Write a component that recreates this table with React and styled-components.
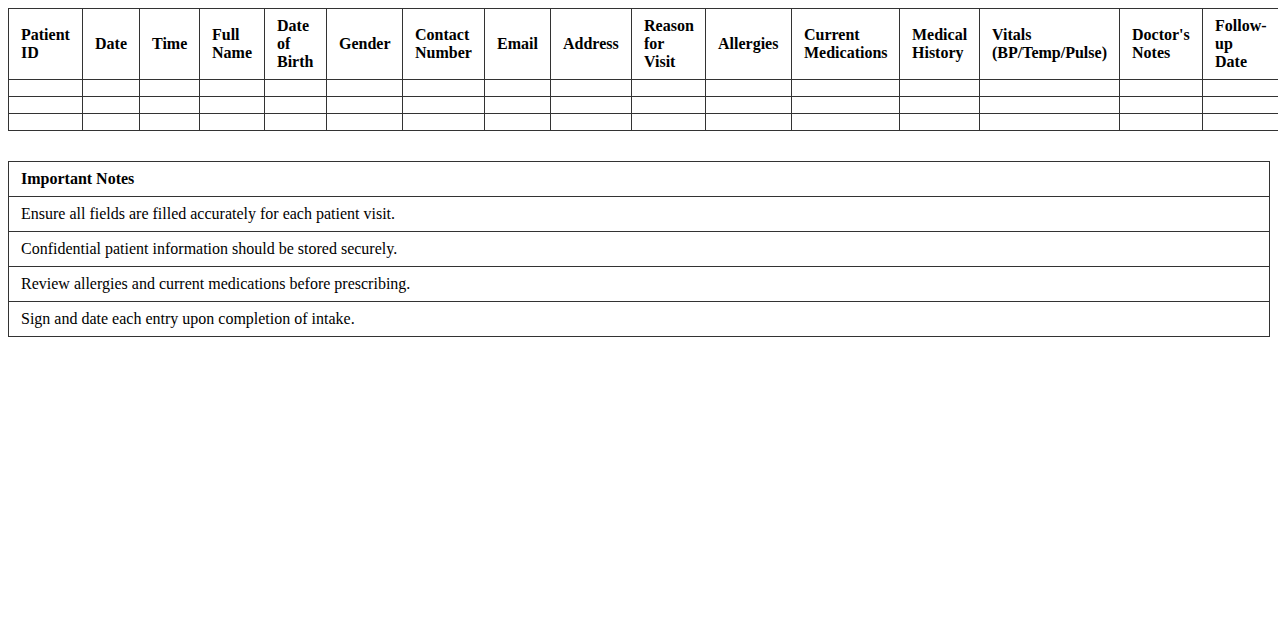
import React from "react";
import styled, { createGlobalStyle } from "styled-components";

const GlobalStyle = createGlobalStyle`
  body {
    margin: 0;
    font-family: "Liberation Serif", "Times New Roman", serif;
    font-size: 16px;
    color: #000;
    background: #fff;
  }
`;

const Page = styled.div`
  padding: 8px;
  overflow: hidden;
`;

const Table = styled.table`
  width: ${(p) => (p.$width ? `${p.$width}px` : "100%")};
  table-layout: ${(p) => (p.$width ? "fixed" : "auto")};
  border-collapse: collapse;
  margin-bottom: ${(p) => p.$gap || 0}px;
`;

const Col = styled.col`
  width: ${(p) => p.$w}px;
`;

const Th = styled.th`
  border: 1px solid #333;
  padding: 8px ${(p) => p.$padRight || 12}px 8px 12px;
  text-align: left;
  font-weight: bold;
  vertical-align: middle;
`;

const Td = styled.td`
  border: 1px solid #333;
  padding: 8px 12px;
  text-align: left;
`;

const columns = [
  { label: "Patient ID", w: 74 },
  { label: "Date", w: 57 },
  { label: "Time", w: 60 },
  { label: "Full Name", w: 65 },
  { label: "Date of Birth", w: 62 },
  { label: "Gender", w: 76 },
  { label: "Contact Number", w: 82 },
  { label: "Email", w: 66 },
  { label: "Address", w: 81 },
  { label: "Reason for Visit", w: 74 },
  { label: "Allergies", w: 86 },
  { label: "Current Medications", w: 108 },
  { label: "Medical History", w: 80 },
  { label: "Vitals (BP/Temp/Pulse)", w: 140 },
  { label: "Doctor's Notes", w: 83 },
  { label: "Follow-up Date", w: 86, padRight: 30 },
];

const tableWidth = columns.reduce((s, c) => s + c.w, 0);

const notes = [
  "Ensure all fields are filled accurately for each patient visit.",
  "Confidential patient information should be stored securely.",
  "Review allergies and current medications before prescribing.",
  "Sign and date each entry upon completion of intake.",
];

function App() {
  return (
    <>
      <GlobalStyle />
      <Page>
        <Table $gap={30} $width={tableWidth}>
          <colgroup>
            {columns.map((c) => (
              <Col key={c.label} $w={c.w} />
            ))}
          </colgroup>
          <thead>
            <tr>
              {columns.map((c) => (
                <Th key={c.label} $padRight={c.padRight}>
                  {c.label}
                </Th>
              ))}
            </tr>
          </thead>
          <tbody>
            {[0, 1, 2].map((r) => (
              <tr key={r}>
                {columns.map((c) => (
                  <Td key={c.label}></Td>
                ))}
              </tr>
            ))}
          </tbody>
        </Table>

        <Table>
          <thead>
            <tr>
              <Th>Important Notes</Th>
            </tr>
          </thead>
          <tbody>
            {notes.map((n) => (
              <tr key={n}>
                <Td>{n}</Td>
              </tr>
            ))}
          </tbody>
        </Table>
      </Page>
    </>
  );
}

export default App;
